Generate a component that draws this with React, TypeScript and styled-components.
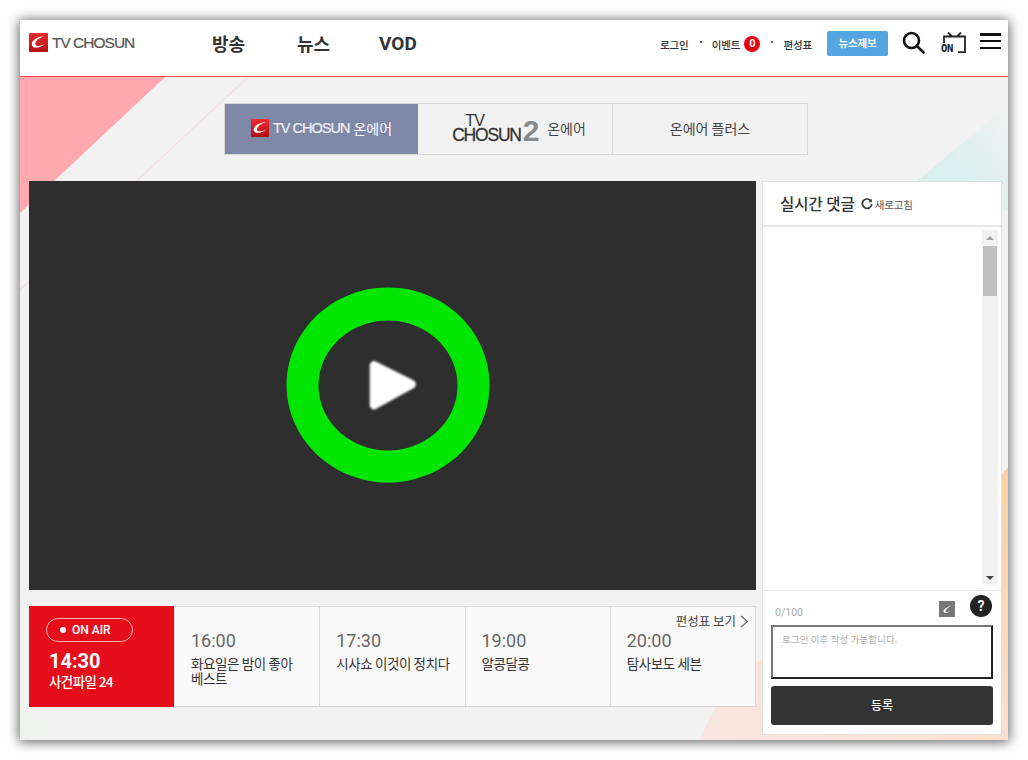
import React from "react";
import styled, { createGlobalStyle } from "styled-components";

const KR = `"Noto Sans CJK KR", "Noto Sans", sans-serif`;
const RB = `Roboto, "Noto Sans CJK KR", sans-serif`;

const Global = createGlobalStyle`
  html, body { margin: 0; padding: 0; background: #fff; }
  * { box-sizing: border-box; }
  body { font-family: ${KR}; }
`;

const Page = styled.div`
  width: 1028px;
  height: 760px;
  padding: 20px;
  overflow: hidden;
  background: #fff;
`;
const Win = styled.div`
  width: 988px;
  height: 720px;
  display: flex;
  flex-direction: column;
  box-shadow: 0 1px 11px 1px rgba(0, 0, 0, 0.62);
  background: #f2f2f2;
  overflow: hidden;
`;
const Header = styled.header`
  flex: none;
  height: 57px;
  background: #fff;
  border-bottom: 1px solid #f04450;
  display: flex;
  align-items: flex-start;
  padding: 0 6px 0 9px;
`;
const Brand = styled.div`
  display: flex;
  align-items: center;
  gap: 4px;
  flex: none;
  width: 183px;
  height: 45px;
`;
const BrandText = styled.span<{ $size: number; $color: string }>`
  font-family: "Liberation Sans", sans-serif;
  font-size: ${(p) => p.$size}px;
  letter-spacing: -1px;
  color: ${(p) => p.$color};
  white-space: nowrap;
  -webkit-text-stroke: 0.2px ${(p) => p.$color};
`;
const Nav = styled.nav`
  display: flex;
  align-items: center;
  flex: none;
  height: 46px;
  width: 448px;
  font-size: 18px;
  font-weight: 700;
  color: #333;
`;
const NavItem = styled.span<{ $w: number; $size?: number }>`
  width: ${(p) => p.$w}px;
  font-family: ${RB};
  font-size: ${(p) => p.$size || 18}px;
  flex: none;
`;
const Util = styled.div`
  display: flex;
  align-items: center;
  flex: none;
  white-space: nowrap;
  height: 47px;
  padding-top: 1px;
  font-size: 10.5px;
  color: #333;
  font-weight: 500;
  letter-spacing: -0.1px;
`;
const Dot = styled.span`
  width: 2px;
  height: 2px;
  background: #333;
  border-radius: 50%;
  margin: -5px 10px 0 11px;
`;
const Badge = styled.span`
  width: 16px;
  height: 16px;
  border-radius: 50%;
  background: #e60012;
  color: #fff;
  font: 700 11px/16px ${RB};
  text-align: center;
  margin-left: 4px;
`;
const Tip = styled.span`
  width: 61px;
  height: 25px;
  background: #55a6e0;
  border-radius: 2px;
  color: #fff;
  font-size: 10.5px;
  font-weight: 700;
  line-height: 23px;
  text-align: center;
  margin: -1px 14px 0 15px;
`;
const IconRow = styled.div`
  display: flex;
  align-items: flex-start;
  flex: none;
  padding-top: 11px;
`;
const OnIcon = styled.div`
  position: relative;
  width: 25px;
  height: 22px;
  margin: 1px 14px 0 16px;
`;
const OnLabel = styled.span`
  position: absolute;
  left: 0;
  bottom: 1px;
  font: 700 10.5px/10px "DejaVu Sans Mono", monospace;
  letter-spacing: -0.5px;
  color: #111;
`;
const Burger = styled.div`
  display: flex;
  flex-direction: column;
  gap: 4.2px;
  width: 21px;
  margin-top: 2px;
  span {
    height: 2.6px;
    background: #111;
  }
`;
const Main = styled.main`
  position: relative;
  flex: 1;
  padding: 26px 6px 5px 9px;
`;
const Decor = styled.svg`
  position: absolute;
  inset: 0;
`;
const Tabs = styled.div`
  position: relative;
  display: flex;
  width: 584px;
  height: 52px;
  margin: 0 0 26px 195px;
  border: 1px solid #d8d8d8;
`;
const Tab = styled.div<{ $active?: boolean; $w: number }>`
  width: ${(p) => p.$w}px;
  display: flex;
  align-items: center;
  justify-content: center;
  gap: 4px;
  padding-bottom: 2px;
  font-size: 14px;
  color: ${(p) => (p.$active ? "#fff" : "#444")};
  background: ${(p) => (p.$active ? "#8088a8" : "transparent")};
  border-right: ${(p) => (p.$active ? "0" : "1px solid #d8d8d8")};
  &:last-child { border-right: 0; }
`;
const TvLogo = styled.div`
  position: relative;
  display: flex;
  align-items: flex-end;
  width: 84px;
  height: 28px;
  margin: 3px 7px 0 8px;
`;
const TvSmall = styled.span`
  position: absolute;
  left: 13px;
  top: -3px;
  font: 400 16px/15px "Liberation Sans", sans-serif;
  letter-spacing: -0.8px;
  color: #333;
`;
const TvWord = styled.span`
  font: 400 17.5px/17px "Liberation Sans", sans-serif;
  letter-spacing: -1.2px;
  color: #333;
  -webkit-text-stroke: 0.3px #333;
`;
const TvTwo = styled.span`
  font: 700 30px/26px "Liberation Sans", sans-serif;
  color: #8a8a8a;
  margin-left: 2px;
`;
const Body = styled.div`
  position: relative;
  display: flex;
  gap: 6px;
`;
const Left = styled.div`
  width: 727px;
  display: flex;
  flex-direction: column;
  gap: 16px;
`;
const Video = styled.div`
  position: relative;
  height: 409px;
  background: #2e2e2e;
`;
const Ring = styled.svg`
  position: absolute;
  left: 257px;
  top: 106px;
`;
const Schedule = styled.div`
  display: flex;
  position: relative;
  height: 101px;
  background: #fafafa;
  border: 1px solid #d9d9d9;
  border-left: 0;
`;
const OnAir = styled.div`
  flex: none;
  width: 145px;
  margin: -1px 0;
  background: #e50f1c;
  color: #fff;
  padding: 12px 0 0 17px;
`;
const Pill = styled.div`
  width: 87px;
  height: 24px;
  border: 1px solid #f6b1b5;
  border-radius: 12px;
  display: flex;
  align-items: center;
  padding-left: 13px;
  gap: 6px;
  font: 500 12px ${RB};
`;
const PillDot = styled.span`
  width: 6px;
  height: 6px;
  background: #fff;
  border-radius: 50%;
`;
const NowTime = styled.div`
  font: 700 20px/22px ${RB};
  margin: 8px 0 0 3px;
`;
const NowTitle = styled.div`
  font: 500 13.5px/16px ${KR};
  letter-spacing: -0.6px;
  margin: 1px 0 0 3px;
`;
const Slot = styled.div`
  flex: 1;
  padding: 22px 6px 0 16px;
  border-left: 1px solid #d9d9d9;
  &:first-of-type { border-left: 0; }
`;
const SlotTime = styled.div`
  font: 400 18px/24px ${RB};
  color: #666;
`;
const SlotTitle = styled.div`
  font-size: 13.5px;
  line-height: 15px;
  color: #333;
  letter-spacing: -0.4px;
  margin-top: 3px;
`;
const More = styled.div`
  position: absolute;
  right: 6px;
  top: 5px;
  display: flex;
  align-items: center;
  gap: 4px;
  font-size: 12.5px;
  line-height: 18px;
  color: #444;
`;
const Chat = styled.aside`
  width: 240px;
  height: 554px;
  background: #fff;
  border: 1px solid #e2e2e2;
  display: flex;
  flex-direction: column;
`;
const ChatHead = styled.div`
  flex: none;
  height: 45px;
  border-bottom: 2px solid #e6e6e6;
  display: flex;
  align-items: center;
  padding: 0 0 2px 17px;
  gap: 6px;
`;
const ChatTitle = styled.span`
  font-size: 15.5px;
  font-weight: 500;
  color: #333;
`;
const Refresh = styled.span`
  display: flex;
  align-items: center;
  gap: 2px;
  margin-top: 3px;
  font-size: 10.5px;
  letter-spacing: -0.2px;
  color: #555;
`;
const ChatList = styled.div`
  flex: none;
  height: 364px;
  display: flex;
  justify-content: flex-end;
  padding: 3px 3px 5px 0;
  border-bottom: 1px solid #e6e6e6;
`;
const Track = styled.div`
  position: relative;
  width: 16px;
  background: #f1f1f1;
`;
const Thumb = styled.div`
  position: absolute;
  top: 16px;
  left: 1px;
  width: 14px;
  height: 50px;
  background: #c1c1c1;
`;
const Arrow = styled.span<{ $down?: boolean }>`
  position: absolute;
  left: 4px;
  ${(p) => (p.$down ? "bottom: 5px;" : "top: 6px;")}
  border-left: 4px solid transparent;
  border-right: 4px solid transparent;
  ${(p) => (p.$down ? "border-top: 4px solid #444;" : "border-bottom: 4px solid #a3a3a3;")}
`;
const Form = styled.div`
  flex: 1;
  padding: 4px 8px 0 8px;
  display: flex;
  flex-direction: column;
`;
const FormTop = styled.div`
  position: relative;
  height: 30px;
  display: flex;
  align-items: flex-end;
  justify-content: space-between;
`;
const Count = styled.span`
  font: 400 10.5px/14px ${RB};
  color: #aaa;
  margin: 0 0 5px 4px;
`;
const FormIcons = styled.div`
  display: flex;
  align-items: flex-start;
  gap: 15px;
  align-self: flex-start;
  margin-right: 1px;
`;
const Mini = styled.svg`
  margin-top: 6px;
`;
const Help = styled.span`
  width: 22px;
  height: 22px;
  border-radius: 50%;
  background: #222;
  color: #fff;
  font: 700 14px/22px ${RB};
  text-align: center;
`;
const Box = styled.div`
  height: 54px;
  border: 2px solid;
  border-color: #767676 #222 #222 #767676;
  font-size: 9.5px;
  line-height: 14px;
  letter-spacing: 0.1px;
  color: #b0b0b0;
  padding: 5px 9px;
`;
const Submit = styled.div`
  height: 39px;
  margin-top: 7px;
  background: #333;
  border-radius: 3px;
  color: #fff;
  font-size: 12px;
  font-weight: 500;
  line-height: 38px;
  text-align: center;
`;

const Swoosh = ({ size, bg }: { size: number; bg?: string }) => (
  <svg width={size} height={size} viewBox="0 0 20 20">
    <defs>
      <linearGradient id="lg" x1="0" y1="0" x2="0" y2="1">
        <stop offset="0" stopColor="#f02b30" />
        <stop offset="1" stopColor="#b20f16" />
      </linearGradient>
    </defs>
    <rect width="20" height="20" rx="1" fill={bg || "url(#lg)"} />
    <path d="M16.500 3.500C10 3.500 3 7 3 12C3 16.800 11.500 16.500 17.500 11C13.500 13.500 7.500 14.800 6.800 12.200C6 9 11 4.500 16.500 3.500Z" fill="#fff" />
  </svg>
);

export default function App() {
  return (
    <Page>
      <Global />
      <Win>
        <Header>
          <Brand>
            <Swoosh size={19} />
            <BrandText $size={15.5} $color="#555">TV CHOSUN</BrandText>
          </Brand>
          <Nav>
            <NavItem $w={85}>방송</NavItem>
            <NavItem $w={82}>뉴스</NavItem>
            <NavItem $w={60} $size={19}>VOD</NavItem>
          </Nav>
          <Util>
            <span>로그인</span>
            <Dot />
            <span>이벤트</span>
            <Badge>0</Badge>
            <Dot />
            <span>편성표</span>
            <Tip>뉴스제보</Tip>
          </Util>
          <IconRow>
            <svg width="23" height="23" viewBox="0 0 23 23" fill="none" stroke="#111" strokeWidth="2.6">
              <circle cx="9.500" cy="9.500" r="7.500" />
              <path d="M15 15l6.500 6.500" strokeLinecap="round" />
            </svg>
            <OnIcon>
              <svg width="25" height="22" viewBox="0 0 25 22" fill="none" stroke="#222" strokeWidth="1.8">
                <path d="M7 0.500l4 4M20 0.500l-4 4M3 11V4.500h21v15.700h-7" />
              </svg>
              <OnLabel>ON</OnLabel>
            </OnIcon>
            <Burger>
              <span />
              <span />
              <span />
            </Burger>
          </IconRow>
        </Header>
        <Main>
          <Decor width="988" height="663" viewBox="0 0 988 663">
            <defs>
              <linearGradient id="teal" x1="0" y1="1" x2="1" y2="0">
                <stop offset="0.45" stopColor="#d9f0ec" />
                <stop offset="1" stopColor="#f2f2f2" />
              </linearGradient>
              <linearGradient id="peach" x1="1" y1="0" x2="0" y2="1">
                <stop offset="0" stopColor="#fccfa2" />
                <stop offset="0.6" stopColor="#fae3d6" />
                <stop offset="1" stopColor="#f8e6e0" />
              </linearGradient>
            </defs>
            <polygon points="0,0 145,0 0,136" fill="#ffa9ae" />
            <line x1="228" y1="0" x2="0" y2="213" stroke="#fad6d6" strokeWidth="1" />
            <polygon points="897,104 988,28 988,132 960,150" fill="url(#teal)" />
            <path d="M680 663C700 610 735 585 790 545 870 490 940 450 988 390V663Z" fill="url(#peach)" />
            <polygon points="0,663 0,630 45,663" fill="#eff2ef" />
          </Decor>
          <Tabs>
            <Tab $active $w={193}>
              <Swoosh size={18} />
              <BrandText $size={14.5} $color="#eef0f4">TV CHOSUN</BrandText>
              <span>온에어</span>
            </Tab>
            <Tab $w={195}>
              <TvLogo>
                <TvSmall>TV</TvSmall>
                <TvWord>CHOSUN</TvWord>
                <TvTwo>2</TvTwo>
              </TvLogo>
              <span>온에어</span>
            </Tab>
            <Tab $w={194}>온에어 플러스</Tab>
          </Tabs>
          <Body>
            <Left>
              <Video>
                <Ring width="204" height="196" viewBox="0 0 204 196">
                  <defs>
                    <filter id="soft" x="-20%" y="-20%" width="140%" height="140%">
                      <feGaussianBlur stdDeviation="1" />
                    </filter>
                  </defs>
                  <path
                    fillRule="evenodd"
                    fill="#00e600"
                    d="M102 0.500a101.500 97.500 0 1 0 0.010 0ZM102 33.500a69.500 65 0 1 1-0.010 0Z"
                  />
                  <path
                    d="M89 75L127 94a3.500 3.500 0 0 1 0 6.500L89 121.500a3.500 3.500 0 0 1-4.500-3.500V78.500a3.500 3.500 0 0 1 4.500-3.500Z"
                    fill="#fff"
                    stroke="#fff"
                    strokeWidth="1.5"
                    filter="url(#soft)"
                  />
                </Ring>
              </Video>
              <Schedule>
                <OnAir>
                  <Pill>
                    <PillDot />
                    ON AIR
                  </Pill>
                  <NowTime>14:30</NowTime>
                  <NowTitle>사건파일 24</NowTitle>
                </OnAir>
                <Slot>
                  <SlotTime>16:00</SlotTime>
                  <SlotTitle>화요일은 밤이 좋아<br />베스트</SlotTitle>
                </Slot>
                <Slot>
                  <SlotTime>17:30</SlotTime>
                  <SlotTitle>시사쇼 이것이 정치다</SlotTitle>
                </Slot>
                <Slot>
                  <SlotTime>19:00</SlotTime>
                  <SlotTitle>알콩달콩</SlotTitle>
                </Slot>
                <Slot>
                  <SlotTime>20:00</SlotTime>
                  <SlotTitle>탐사보도 세븐</SlotTitle>
                </Slot>
                <More>
                  편성표 보기
                  <svg width="9" height="13" viewBox="0 0 9 13" fill="none" stroke="#666" strokeWidth="1.1">
                    <path d="M1 1l6.500 5.500L1 12" />
                  </svg>
                </More>
              </Schedule>
            </Left>
            <Chat>
              <ChatHead>
                <ChatTitle>실시간 댓글</ChatTitle>
                <Refresh>
                  <svg width="12" height="12" viewBox="0 0 12 12" fill="none" stroke="#333" strokeWidth="1.7">
                    <path d="M10 3.200A4.700 4.700 0 1 0 10.700 6" />
                    <path d="M10.800 0.800v3.400H7.400z" fill="#333" stroke="none" />
                  </svg>
                  새로고침
                </Refresh>
              </ChatHead>
              <ChatList>
                <Track>
                  <Arrow />
                  <Thumb />
                  <Arrow $down />
                </Track>
              </ChatList>
              <Form>
                <FormTop>
                  <Count>0/100</Count>
                  <FormIcons>
                    <Mini width="16" height="16" viewBox="0 0 16 16">
                      <rect width="16" height="16" fill="#777" />
                      <path d="M12.500 4.500C8 6 4.500 8 4.500 10.500C4.500 12.500 9 12 11.500 10C9 11 6.800 11.500 6.500 10.500C6.300 9 9 6.500 12.500 4.500Z" fill="#fff" />
                    </Mini>
                    <Help>?</Help>
                  </FormIcons>
                </FormTop>
                <Box>로그인 이후 작성 가능합니다.</Box>
                <Submit>등록</Submit>
              </Form>
            </Chat>
          </Body>
        </Main>
      </Win>
    </Page>
  );
}
